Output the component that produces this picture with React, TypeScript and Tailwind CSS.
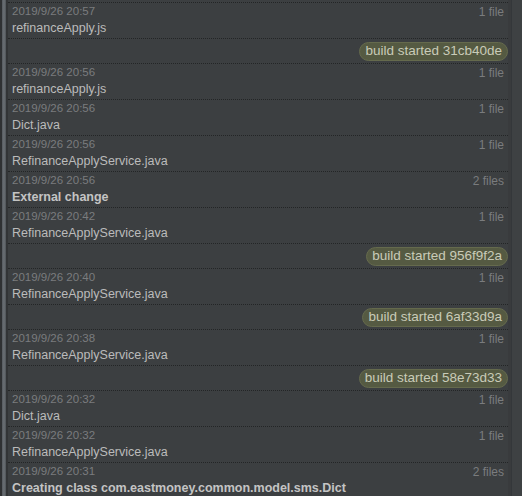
import React from "react";

type Entry =
  | { kind: "change"; date: string; title: string; files: string; bold?: boolean }
  | { kind: "label"; text: string };

const entries: Entry[] = [
  { kind: "change", date: "2019/9/26 20:57", title: "refinanceApply.js", files: "1 file" },
  { kind: "label", text: "build started 31cb40de" },
  { kind: "change", date: "2019/9/26 20:56", title: "refinanceApply.js", files: "1 file" },
  { kind: "change", date: "2019/9/26 20:56", title: "Dict.java", files: "1 file" },
  { kind: "change", date: "2019/9/26 20:56", title: "RefinanceApplyService.java", files: "1 file" },
  { kind: "change", date: "2019/9/26 20:56", title: "External change", files: "2 files", bold: true },
  { kind: "change", date: "2019/9/26 20:42", title: "RefinanceApplyService.java", files: "1 file" },
  { kind: "label", text: "build started 956f9f2a" },
  { kind: "change", date: "2019/9/26 20:40", title: "RefinanceApplyService.java", files: "1 file" },
  { kind: "label", text: "build started 6af33d9a" },
  { kind: "change", date: "2019/9/26 20:38", title: "RefinanceApplyService.java", files: "1 file" },
  { kind: "label", text: "build started 58e73d33" },
  { kind: "change", date: "2019/9/26 20:32", title: "Dict.java", files: "1 file" },
  { kind: "change", date: "2019/9/26 20:32", title: "RefinanceApplyService.java", files: "1 file" },
  {
    kind: "change",
    date: "2019/9/26 20:31",
    title: "Creating class com.eastmoney.common.model.sms.Dict",
    files: "2 files",
    bold: true,
  },
];

export default function App() {
  return (
    <div
      className="w-[522px] h-[496px] overflow-hidden flex bg-[#3c3f41]"
      style={{ fontFamily: '"Liberation Sans", Arial, sans-serif' }}
    >
      {/* left gutter strip */}
      <div className="w-[2px] bg-[#2f3133]" />
      <div className="w-[4px] bg-gradient-to-r from-[#555a5f] via-[#6b7075] to-[#4e5357]" />
      <div className="w-[2px] bg-[#323436]" />

      <div className="flex-1 pt-[2px] min-w-0">
        {entries.map((e, i) =>
          e.kind === "label" ? (
            <div
              key={i}
              className="h-[25px] border-t border-dotted border-[#232526] flex items-center justify-end"
            >
              <span className="h-[19px] px-[5px] flex items-center rounded-full bg-[#555a42] border border-[#656a4d] text-[13.5px] text-[#c9cbb8] leading-none">
                {e.text}
              </span>
            </div>
          ) : (
            <div
              key={i}
              className="h-[36px] border-t border-dotted border-[#232526] pl-[4px] pr-[4px]"
            >
              <div className="flex justify-between pt-[2px] h-[16px] items-center text-[11.5px] text-[#7a7c7e] leading-none">
                <span>{e.date}</span>
                <span className="text-[12px]">{e.files}</span>
              </div>
              <div
                className={
                  "text-[12.5px] leading-none pt-[3px] whitespace-nowrap " +
                  (e.bold ? "font-bold text-[#c4c4c4]" : "text-[#bbbbbb]")
                }
              >
                {e.title}
              </div>
            </div>
          )
        )}
      </div>

      {/* scrollbar track */}
      <div className="w-[14px] flex">
        <div className="w-[3px] bg-[#393b3d]" />
        <div className="flex-1 bg-[#3e4143] border-l border-[#34373a]" />
      </div>
    </div>
  );
}
